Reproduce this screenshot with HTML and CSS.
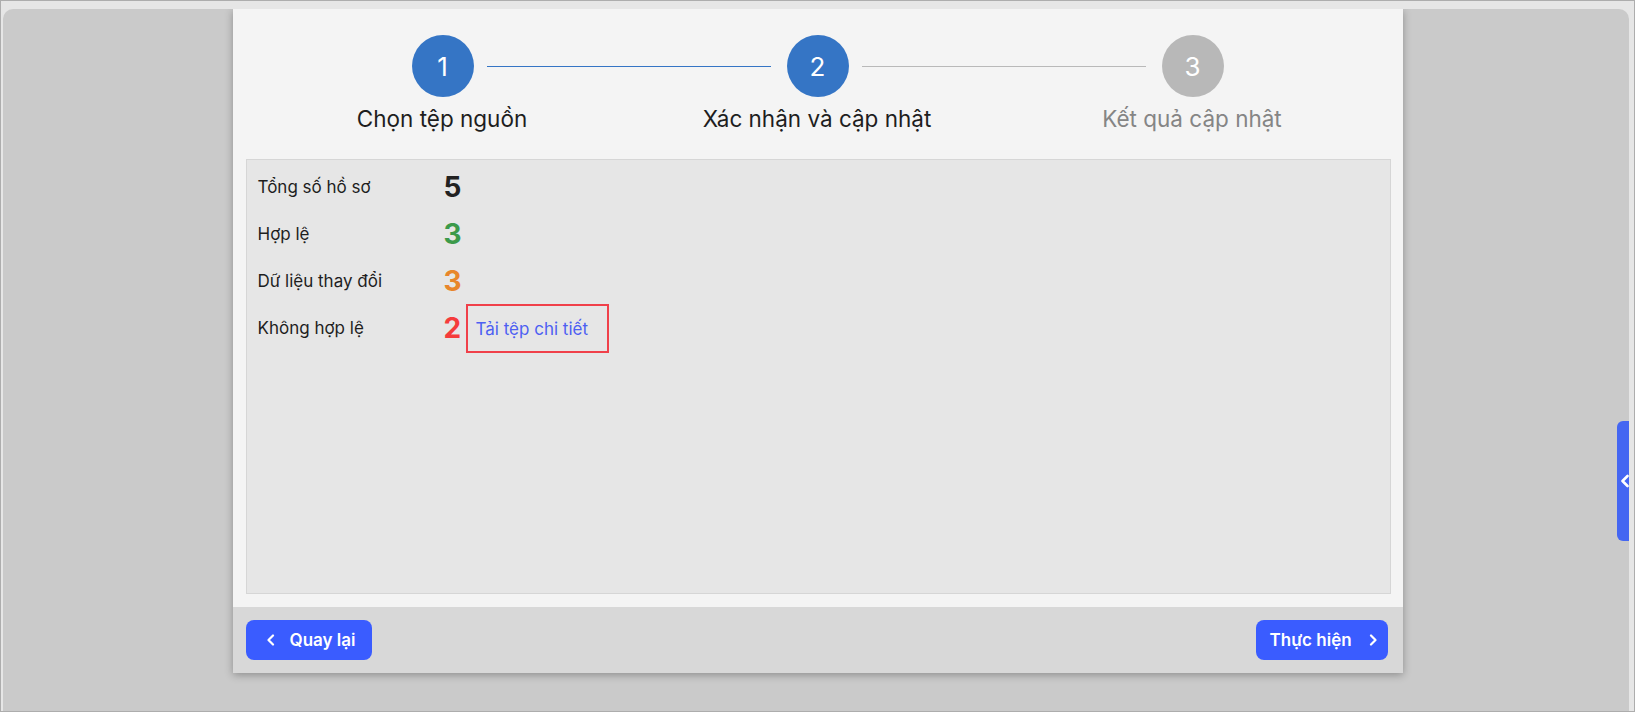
FILE: index.html
```html
<!DOCTYPE html>
<html lang="vi">
	<head>
		<meta charset="UTF-8">
		<title>Cập nhật hồ sơ</title>
		<link rel="stylesheet" href="styles.css">
	</head>
	<body>
		<div class="frame">
			<div class="desk">
				<div class="dialog">
					<div class="steps">
						<div class="stepRow">
							<div class="circle done">1</div>
							<div class="line done"></div>
							<div class="circle done">2</div>
							<div class="line"></div>
							<div class="circle">3</div>
						</div>
						<div class="stepLabels">
							<div class="stepLabel">Chọn tệp nguồn</div>
							<div class="stepLabel">Xác nhận và cập nhật</div>
							<div class="stepLabel todo">Kết quả cập nhật</div>
						</div>
					</div>
					<div class="summary">
						<div class="row">
							<span class="label">Tổng số hồ sơ</span>
							<span class="count total">5</span>
						</div>
						<div class="row">
							<span class="label">Hợp lệ</span>
							<span class="count valid">3</span>
						</div>
						<div class="row">
							<span class="label">Dữ liệu thay đổi</span>
							<span class="count changed">3</span>
						</div>
						<div class="row">
							<span class="label">Không hợp lệ</span>
							<span class="count invalid">2</span>
							<span class="highlight"><a class="link" href="#">Tải tệp chi tiết</a></span>
						</div>
					</div>
					<div class="footer">
						<button class="btn back">
							<svg width="10" height="12" viewBox="0 0 10 12"><polyline points="7,1.5 2.5,6 7,10.5" fill="none" stroke="#fff" stroke-width="2.2" stroke-linecap="round" stroke-linejoin="round"/></svg>
							Quay lại
						</button>
						<button class="btn next">
							Thực hiện
							<svg width="10" height="12" viewBox="0 0 10 12"><polyline points="3,1.5 7.5,6 3,10.5" fill="none" stroke="#fff" stroke-width="2.2" stroke-linecap="round" stroke-linejoin="round"/></svg>
						</button>
					</div>
				</div>
				<div class="sideTab">
					<svg width="10" height="14" viewBox="0 0 10 14"><polyline points="7.5,2 2.5,7 7.5,12" fill="none" stroke="#fff" stroke-width="2.6" stroke-linecap="round" stroke-linejoin="round"/></svg>
				</div>
			</div>
		</div>
	</body>
</html>
```

FILE: styles.css
```css
html {
	font-family: Inter, "Noto Sans", sans-serif;
}

body {
	margin: 0;
	background-color: #e6e6e6;
}

.frame {
	box-sizing: border-box;
	width: 1635px;
	height: 712px;
	border: 1px solid #adadad;
	background-color: #e6e6e6;
	padding: 8px 5px 0 2px;
}

.desk {
	position: relative;
	height: 100%;
	background-color: #cacaca;
	border-radius: 10px 10px 0 0;
	overflow: hidden;
	display: flex;
	justify-content: center;
	align-items: flex-start;
}

.dialog {
	width: 1170px;
	margin-left: 3px;
	background-color: #f4f4f4;
	box-shadow: rgba(0, 0, 0, 0.3) 0px 2px 8px;
}

.steps {
	padding-top: 26px;
}

.stepRow {
	display: flex;
	align-items: center;
	margin: 0 179px;
}

.circle {
	width: 62px;
	height: 62px;
	flex: none;
	border-radius: 50%;
	background-color: #b8b8b8;
	color: white;
	font-size: 26px;
	display: flex;
	align-items: center;
	justify-content: center;
}
.circle.done {
	background-color: #3575c5;
}

.line {
	flex: 1;
	height: 1px;
	margin: 0 16px 0 13px;
	background-color: #b9b9b9;
}
.line.done {
	background-color: #3575c5;
}

.stepLabels {
	display: grid;
	grid-template-columns: repeat(3, 375px);
	padding: 0 22px;
	margin-top: 8px;
}
.stepLabel {
	text-align: center;
	font-size: 22.5px;
	line-height: 28px;
	color: #1e1e1e;
}
.stepLabel.todo {
	color: #858585;
}

.summary {
	margin: 26px 12px 0 13px;
	height: 435px;
	box-sizing: border-box;
	background-color: #e6e6e6;
	border: 1px solid #d6d6d6;
	padding: 3px 11px;
}

.row {
	display: flex;
	align-items: center;
	height: 47px;
}
.label {
	width: 186px;
	font-size: 17px;
	color: #1e1e1e;
}
.count {
	font-size: 28px;
	font-weight: 700;
	width: 22px;
}
.total { color: #222222; }
.valid { color: #3c9a4a; }
.changed { color: #e8862a; }
.invalid { color: #f53c3c; }

.highlight {
	box-sizing: border-box;
	height: 49px;
	width: 143px;
	flex: none;
	border: 2px solid #f0404a;
	padding: 0 8px;
	display: flex;
	align-items: center;
	margin-top: 2px;
}
.link {
	color: #4d5ff2;
	font-size: 17px;
	text-decoration: none;
}

.footer {
	margin-top: 13px;
	background-color: #d8d8d8;
	padding: 13px 15px 13px 13px;
	display: flex;
	justify-content: space-between;
}

.btn {
	height: 40px;
	border: none;
	border-radius: 8px;
	background-color: #3a5cff;
	color: white;
	font-family: Inter, sans-serif;
	font-size: 17px;
	font-weight: 600;
	display: flex;
	align-items: center;
}
.back {
	width: 126px;
	padding: 0 0 0 20px;
	gap: 14px;
}
.next {
	width: 132px;
	padding: 0 0 0 14px;
	gap: 16px;
}

.sideTab {
	position: absolute;
	right: -4px;
	top: 412px;
	width: 16px;
	height: 120px;
	border-radius: 6px 0 0 6px;
	background-color: #4466f2;
	display: flex;
	align-items: center;
	padding-left: 3px;
	box-sizing: border-box;
}
```
